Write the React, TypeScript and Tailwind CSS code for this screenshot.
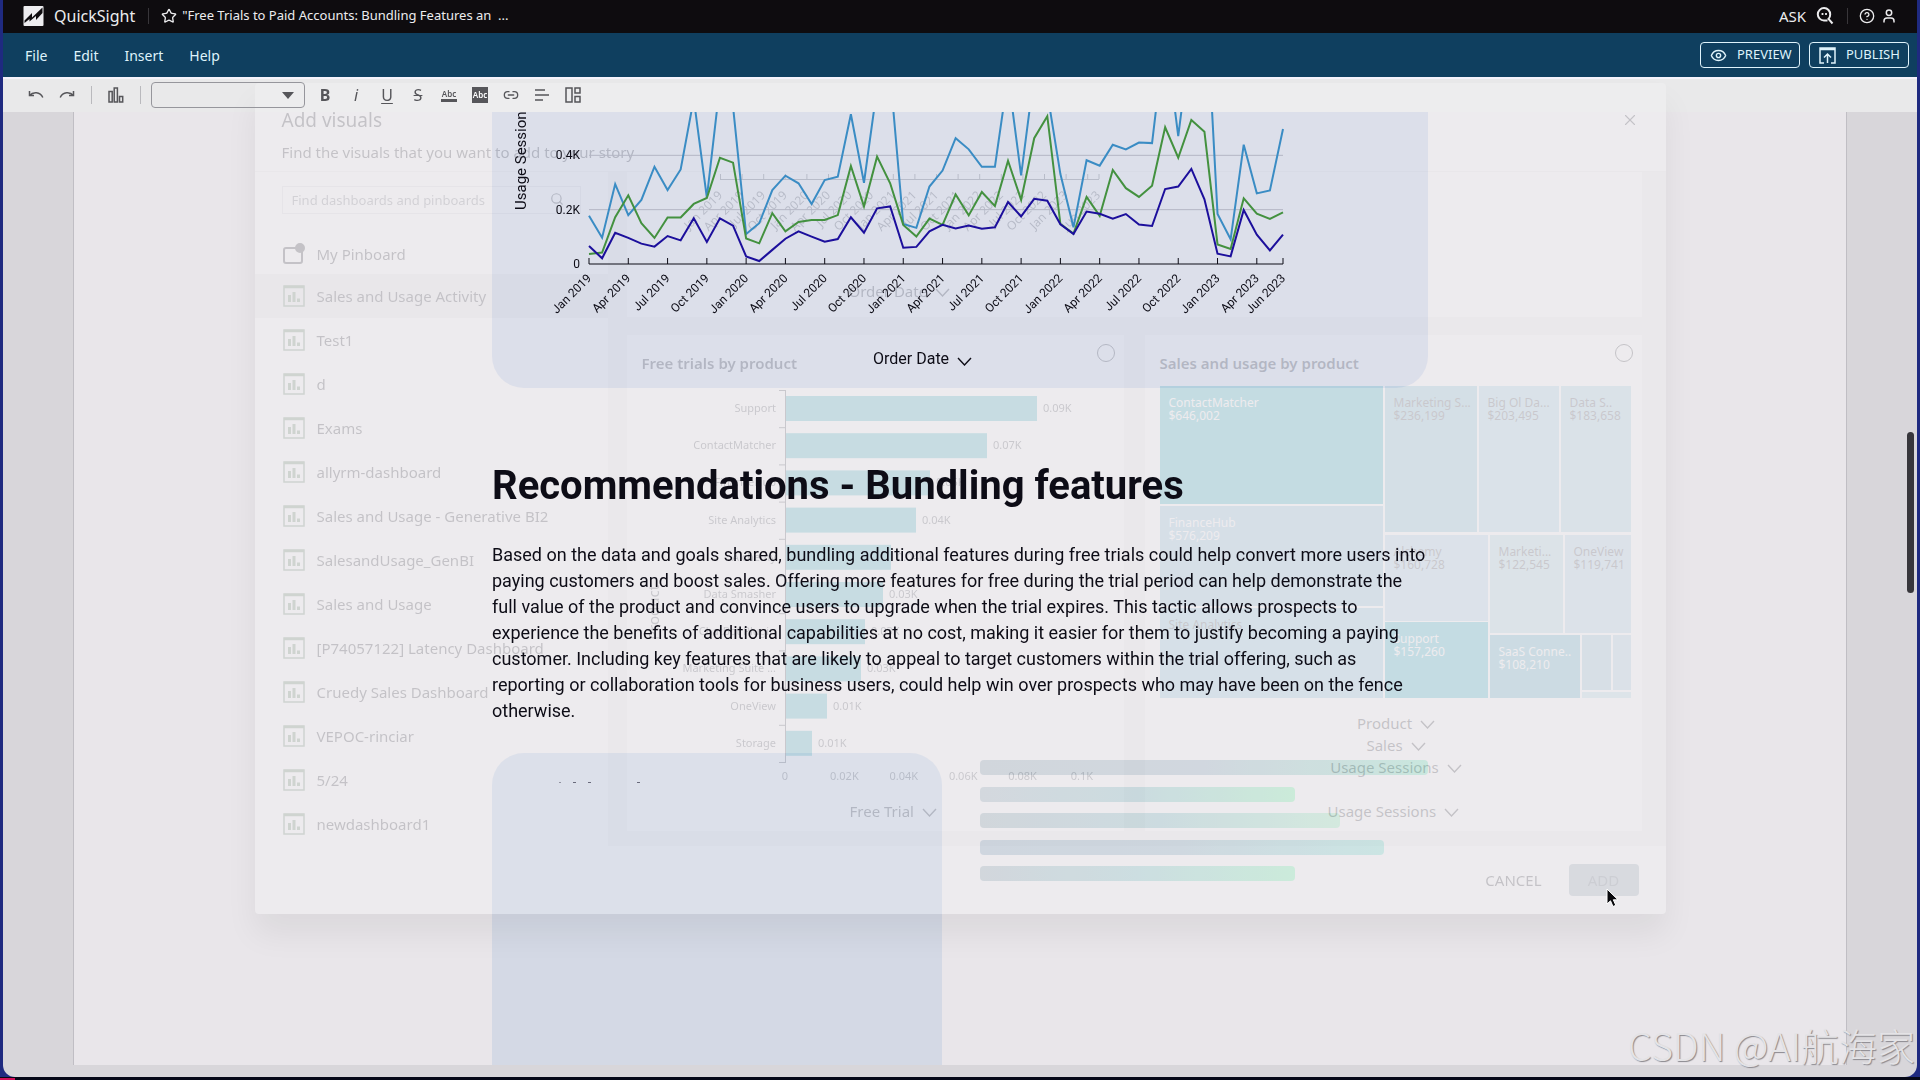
import React from "react";
import { LuSearch, LuX, LuStar, LuCircleHelp, LuEye, LuLink2 } from "react-icons/lu";

const dashboards = [
  "Sales and Usage Activity",
  "Test1",
  "d",
  "Exams",
  "allyrm-dashboard",
  "Sales and Usage - Generative BI2",
  "SalesandUsage_GenBI",
  "Sales and Usage",
  "[P74057122] Latency Dashboard",
  "Cruedy Sales Dashboard",
  "VEPOC-rinciar",
  "5/24",
  "newdashboard1",
];

const quarters = [
  "Jan 2019", "Apr 2019", "Jul 2019", "Oct 2019",
  "Jan 2020", "Apr 2020", "Jul 2020", "Oct 2020",
  "Jan 2021", "Apr 2021", "Jul 2021", "Oct 2021",
  "Jan 2022", "Apr 2022", "Jul 2022", "Oct 2022",
  "Jan 2023", "Apr 2023", "Jun 2023",
];

// monthly usage sessions, Jan 2019 - Jun 2023
const series = [
  {
    color: "#3a8cc4",
    values: [
      178, 97, 294, 180, 236, 358, 272, 348, 608, 244, 662, 579,
      110, 150, 272, 325, 297, 221, 309, 321, 551, 299, 648, 700,
      147, 133, 285, 344, 463, 422, 358, 358, 694, 326, 700, 630,
      331, 135, 382, 362, 439, 422, 447, 445, 850, 471, 850, 1090,
      184, 91, 439, 260, 271, 497,
    ],
  },
  {
    color: "#43913f",
    values: [
      37, 42, 172, 253, 150, 96, 171, 171, 221, 243, 391, 373,
      94, 76, 187, 120, 155, 162, 162, 180, 361, 212, 395, 297,
      144, 101, 167, 144, 256, 179, 265, 213, 380, 236, 463, 544,
      147, 112, 247, 177, 346, 279, 247, 288, 503, 391, 530, 487,
      72, 55, 242, 185, 166, 190,
    ],
  },
  {
    color: "#1c0f9c",
    values: [
      66, 21, 115, 96, 75, 64, 103, 87, 168, 81, 168, 141,
      28, 11, 52, 93, 120, 101, 82, 92, 172, 115, 205, 212,
      60, 63, 120, 144, 131, 142, 130, 135, 228, 175, 240, 233,
      146, 110, 193, 185, 167, 184, 145, 140, 276, 285, 350, 238,
      38, 28, 199, 108, 50, 108,
    ],
  },
];

const trials = [
  { name: "Support", width: 251, label: "0.09K" },
  { name: "ContactMatcher", width: 201, label: "0.07K" },
  { name: "FinanceHub", width: 144, label: "0.05K" },
  { name: "Site Analytics", width: 130, label: "0.04K" },
  { name: "Alchemy", width: 105, label: "0.04K" },
  { name: "Data Smasher", width: 97, label: "0.03K" },
  { name: "ChatBot Plugin", width: 79, label: "0.03K" },
  { name: "Marketing Suite ...", width: 75, label: "0.03K" },
  { name: "OneView", width: 41, label: "0.01K" },
  { name: "Storage", width: 26, label: "0.01K" },
];

const X0 = 97;
const X1 = 791;
const BASE = 152;
const monthX = (i: number) => X0 + (i * (X1 - X0)) / 53;
const valueY = (v: number) => BASE - v * 0.2717;
const quarterX = (i: number) => (i === 18 ? X1 : monthX(i * 3));

function Divider(props: { className: string }) {
  return <span className={`w-px ${props.className}`} />;
}

function Chevron() {
  return (
    <svg className="mt-1" width="15" height="9" viewBox="0 0 15 9" fill="none" stroke="currentColor" strokeWidth="1.400">
      <path d="M1 1l6.500 7L14 1" />
    </svg>
  );
}

function TopBar() {
  return (
    <header className="flex h-[33px] items-center bg-[#0e0c0f] pb-px pr-[22px] pl-5 text-[#ececee]">
      <svg width="21" height="20" viewBox="0 0 20 20" aria-hidden="true">
        <path fill="#ededf0" d="M1 0h18a1 1 0 0 1 1 1v18a1 1 0 0 1-1 1H1a1 1 0 0 1-1-1V1a1 1 0 0 1 1-1z" />
        <path fill="#0e0c0f" d="M1 14.500L8.500 7v4.500L19 1.500v5.500L12.500 14v-4L6 15.500v-2.500L1 17z" />
      </svg>
      <span className="ml-[10px] text-[16px]">QuickSight</span>
      <Divider className="ml-[13px] h-4 bg-[#38363a]" />
      <button aria-label="Favorite" className="ml-[12px]">
        <LuStar size={16} />
      </button>
      <span className="ml-[5px] text-[13px]">"Free Trials to Paid Accounts: Bundling Features an&nbsp; ...</span>
      <div className="ml-auto flex items-center">
        <button className="flex items-center text-[15px]">
          ASK
          <svg className="ml-[10px]" width="18" height="18" viewBox="0 0 18 18" fill="none" stroke="currentColor" strokeWidth="2">
            <path d="M11.500 13.500H8A6.200 6.200 0 1 1 14.200 7.500c0 2-.5 3.200-1.700 4.400L16.500 16.500" />
            <path d="M6.500 6v2M10 6v2" strokeWidth="1.800" />
          </svg>
        </button>
        <Divider className="ml-[13px] h-4 bg-[#38363a]" />
        <button aria-label="Help" className="ml-[11px]">
          <LuCircleHelp size={16} />
        </button>
        <button aria-label="Account" className="ml-[8px]">
          <svg width="12" height="14" viewBox="0 0 12 14" fill="none" stroke="currentColor" strokeWidth="1.500">
            <circle cx="6" cy="3.800" r="2.700" />
            <path d="M1 13.500V12a3 3 0 0 1 3-3h4a3 3 0 0 1 3 3v1.500" />
          </svg>
        </button>
      </div>
    </header>
  );
}

function MenuBar() {
  return (
    <nav className="flex h-[44px] items-center bg-[#0f3f5f] pr-2 pl-[22px] text-[14px] text-[#dff3fb]">
      <div className="flex gap-[26px]">
        <button>File</button>
        <button>Edit</button>
        <button>Insert</button>
        <button>Help</button>
      </div>
      <div className="ml-auto flex gap-[9px] text-[13px]">
        <button className="flex h-[26px] w-[100px] items-center gap-[10px] rounded border border-[#dff3fb] pl-[9px]">
          <LuEye size={17} />
          PREVIEW
        </button>
        <button className="flex h-[26px] w-[100px] items-center gap-[10px] rounded border border-[#dff3fb] pl-[9px]">
          <svg width="17" height="17" viewBox="0 0 17 17" fill="none" stroke="currentColor" strokeWidth="1.500">
            <path d="M5 16H1V1h15v15h-4M1 2.500h15M8.500 16V7M5 10.500L8.500 7l3.500 3.500" />
          </svg>
          PUBLISH
        </button>
      </div>
    </nav>
  );
}

function Toolbar() {
  return (
    <div className="relative h-[35px] border-t-2 border-[#f4f2fb] bg-[#e9e9ea]">
      <div className="relative z-20 flex h-full items-center pb-[2px] pl-[25px] text-[#56565a]">
        <button aria-label="Undo">
          <svg width="16" height="12" viewBox="0 0 16 12" fill="none" stroke="currentColor" strokeWidth="1.500">
            <path d="M1.500 2v4.500H6M1.500 6.500C5 2.500 12 2.500 14.800 8.500" />
          </svg>
        </button>
        <button aria-label="Redo" className="ml-[15px]">
          <svg width="16" height="12" viewBox="0 0 16 12" fill="none" stroke="currentColor" strokeWidth="1.500">
            <path d="M14.500 2v4.500H10M14.500 6.500C11 2.500 4 2.500 1.200 8.500" />
          </svg>
        </button>
        <Divider className="ml-4 h-[18px] bg-[#b9b9bd]" />
        <button aria-label="Add visual" className="ml-4">
          <svg width="16" height="16" viewBox="0 0 16 16" fill="none" stroke="currentColor" strokeWidth="1.500">
            <path d="M1 4.500h3.200V15H1zM6.200 1h3.200v14H6.200zM11.500 9.500h3.200V15h-3.200z" />
          </svg>
        </button>
        <Divider className="ml-4 h-[18px] bg-[#b9b9bd]" />
        <div className="relative ml-[10px]">
          <select
            aria-label="Paragraph style"
            className="block h-[26px] w-[154px] appearance-none rounded border border-[#96969c]"
          >
            <option></option>
          </select>
          <span className="pointer-events-none absolute top-[10px] right-[11px] border-x-[6px] border-t-[7px] border-x-transparent border-t-[#56565a]" />
        </div>
        <div className="ml-[12px] flex items-center gap-[15px] text-[16px] leading-4">
          <button className="w-4 font-bold">B</button>
          <button className="w-4 italic">i</button>
          <button className="w-4 underline underline-offset-2">U</button>
          <button className="w-4 line-through">S</button>
          <button className="w-4 border-b-[3px] border-[#56565a] text-center text-[8px] leading-[11px] font-semibold">Abc</button>
          <button className="h-4 w-4 bg-[#56565a] text-center text-[8px] leading-4 font-semibold text-white">Abc</button>
          <button aria-label="Link">
            <LuLink2 size={16} />
          </button>
          <button aria-label="Align">
            <svg width="16" height="16" viewBox="0 0 16 16" stroke="currentColor" strokeWidth="1.500">
              <path d="M1 3h10M1 8h14M1 13h8" />
            </svg>
          </button>
          <button aria-label="Layout">
            <svg width="16" height="16" viewBox="0 0 16 16" fill="none" stroke="currentColor" strokeWidth="1.500">
              <path d="M1 1h6v14H1zM10 1h5v5h-5zM10 9.500h5V15h-5z" />
            </svg>
          </button>
        </div>
      </div>
    </div>
  );
}

function UsageChart() {
  return (
    <div className="h-[276px] rounded-b-[32px] bg-[#d4d7e5]">
      <svg className="relative z-20" width="936" height="168" viewBox="0 0 936 168" overflow="hidden">
        <text transform="translate(34 98) rotate(-90)" fontSize="15" fill="#0d0c16">
          Usage Sessions
        </text>
        {[200, 400].map((v) => (
          <line key={v} x1={X0} x2={X1} y1={valueY(v)} y2={valueY(v)} stroke="#b4b6c4" />
        ))}
        {["0", "0.2K", "0.4K"].map((t, i) => (
          <text key={t} x={X0 - 9} y={valueY(i * 200) + 4} textAnchor="end" fontSize="12" fill="#0d0c16">
            {t}
          </text>
        ))}
        {series.map((s) => (
          <polyline
            key={s.color}
            points={s.values.map((v, i) => `${monthX(i)},${valueY(v)}`).join(" ")}
            fill="none"
            stroke={s.color}
            strokeWidth="2"
          />
        ))}
        <line x1={X0} x2={X1} y1={BASE} y2={BASE} stroke="#0d0c16" />
        {quarters.map((q, i) => (
          <line key={q} x1={quarterX(i)} x2={quarterX(i)} y1={BASE - 6} y2={BASE} stroke="#0d0c16" />
        ))}
      </svg>
      <svg className="relative z-20 -mt-3 block" width="936" height="68" viewBox="0 0 936 68">
        {quarters.map((q, i) => (
          <text
            key={q}
            transform={`translate(${quarterX(i) + 3} 11) rotate(-45)`}
            textAnchor="end"
            fontSize="12"
            fill="#0d0c16"
          >
            {q}
          </text>
        ))}
      </svg>
      <button className="relative z-20 mt-[11px] ml-[381px] flex items-center gap-[8px] text-[16px] leading-6 text-[#0d0c16]">
        Order Date
        <Chevron />
      </button>
    </div>
  );
}

function Story() {
  return (
    <main className="flex-1 bg-[#d8d6da] px-[70px] pb-3">
      <article className="h-full border-x border-[#c0bec4] bg-[#e9e6ea] font-[Roboto,sans-serif]">
        <div className="mx-auto w-[936px]">
          <UsageChart />
          <h1 className="relative z-20 mt-[74px] text-[40px] leading-[48px] font-bold text-[#0d0c16]">
            Recommendations - Bundling features
          </h1>
          <p className="relative z-20 mt-[32px] text-[18px] leading-[26px] text-[#0d0c16]">
            Based on the data and goals shared, bundling additional features during free trials could help convert more
            users into paying customers and boost sales. Offering more features for free during the trial period can help
            demonstrate the full value of the product and convince users to upgrade when the trial expires. This tactic
            allows prospects to experience the benefits of additional capabilities at no cost, making it easier for them
            to justify becoming a paying customer. Including key features that are likely to appeal to target customers
            within the trial offering, such as reporting or collaboration tools for business users, could help win over
            prospects who may have been on the fence otherwise.
          </p>
          <div className="mt-[29px] flex">
            <div className="h-[312px] w-[450px] rounded-t-[32px] bg-[#d4d9e5] pt-[29px] pl-[67px]">
              <div className="flex h-px gap-[12px]">
                <i className="w-[2px] bg-[#77788a]" />
                <i className="w-[3px] bg-[#44455a]" />
                <i className="w-[3px] bg-[#44455a]" />
                <i className="ml-[34px] w-[3px] bg-[#44455a]" />
              </div>
            </div>
            <div className="mt-[7px] ml-[38px] flex h-[121px] flex-1 flex-col justify-between">
              <div className="h-[15px] w-full rounded-sm bg-linear-to-r from-[#c6ccd4] via-[#c6ced7] to-[#bce1d6]" />
              <div className="h-[15px] w-[315px] rounded-sm bg-linear-to-r from-[#c9cfd6] via-[#bfd3d9] to-[#bfe6d0]" />
              <div className="h-[15px] w-[360px] rounded-sm bg-linear-to-r from-[#c6ccd3] via-[#c0d3d9] to-[#c9e4d6]" />
              <div className="h-[15px] w-[404px] rounded-sm bg-linear-to-r from-[#c3ccd8] via-[#c3cfd9] to-[#bfdfdd]" />
              <div className="h-[15px] w-[315px] rounded-sm bg-linear-to-r from-[#c7cdd4] via-[#c0d6da] to-[#bfe6d2]" />
            </div>
          </div>
        </div>
      </article>
    </main>
  );
}

function DashboardIcon() {
  return (
    <svg width="22" height="22" viewBox="0 0 22 22" fill="none" stroke="#6a8a6c" strokeWidth="1.500">
      <path d="M1 1h20v20H1z" />
      <path d="M1 2h20" strokeWidth="2.500" />
      <path d="M6.500 17V10M11 17V7M15.500 17v-3.500" strokeWidth="3" />
    </svg>
  );
}

function VisualCard(props: { title: string; children: React.ReactNode }) {
  return (
    <section className="h-[496px] min-w-0 flex-1 bg-white pt-[8px] pr-[9px] pl-[15px]">
      <div className="flex justify-between">
        <h3 className="mt-[8px] text-[15px] leading-6 font-semibold">{props.title}</h3>
        <input
          type="radio"
          name="visual"
          aria-label={props.title}
          className="mt-px h-[18px] w-[18px] appearance-none rounded-full border border-[#33363c]"
        />
      </div>
      {props.children}
    </section>
  );
}

function FieldLabel(props: { text: string }) {
  return (
    <button className="flex items-center gap-[8px] text-[15px] leading-[22px]">
      {props.text}
      <Chevron />
    </button>
  );
}

function TrialsChart() {
  return (
    <svg className="mt-[15px] block" width="467" height="402" viewBox="0 0 467 402" fontSize="11" fill="#4d525a">
      <path d="M143.500 0V372" stroke="#4d525a" />
      {[...trials, null].map((_, i) => (
        <path key={i} d={`M137 ${i * 37.2 + 0.5}h7`} stroke="#4d525a" />
      ))}
      {trials.map((t, i) => (
        <g key={t.name}>
          <rect x="144" y={i * 37.2 + 6} width={t.width} height="25" fill="#40b4c2" />
          <text x="134" y={i * 37.2 + 22} textAnchor="end">
            {t.name}
          </text>
          <text x={150 + t.width} y={i * 37.2 + 22}>
            {t.label}
          </text>
        </g>
      ))}
      {["0", "0.02K", "0.04K", "0.06K", "0.08K", "0.1K"].map((t, i) => (
        <text key={t} x={143 + i * 59.4} y="390" textAnchor="middle">
          {t}
        </text>
      ))}
      <text transform="translate(17 250) rotate(-90)" fontSize="15">
        Product
      </text>
    </svg>
  );
}

function Tile(props: { className: string; name?: string; value?: string }) {
  return (
    <div className={`overflow-hidden pt-[10px] pl-[9px] text-[12px] leading-[13px] ${props.className}`}>
      <div>{props.name}</div>
      <div>{props.value}</div>
    </div>
  );
}

function Treemap() {
  return (
    <div className="mt-[11px] flex h-[312px] gap-[2px] text-[#4d525a]">
      <div className="flex w-[223px] flex-col gap-[2px]">
        <Tile className="h-[118px] bg-[#35b4c2] text-white" name="ContactMatcher" value="$646,002" />
        <Tile className="h-[100px] bg-[#8ac0dc] text-white" name="FinanceHub" value="$576,209" />
        <Tile className="flex-1 bg-[#8ac8e0]" name="Site Analytics" />
      </div>
      <div className="flex w-[246px] flex-col gap-[3px]">
        <div className="flex h-[146px] gap-[2px]">
          <Tile className="w-[92px] bg-[#84c0d4]" name="Marketing S..." value="$236,199" />
          <Tile className="w-[80px] bg-[#a0d2e4]" name="Big Ol Da..." value="$203,495" />
          <Tile className="flex-1 bg-[#a0cfe2]" name="Data S.." value="$183,658" />
        </div>
        <div className="flex flex-1 gap-[2px]">
          <div className="flex w-[103px] flex-col gap-px">
            <Tile className="h-[86px] bg-[#acd2e8]" name="Alchemy" value="$160,728" />
            <Tile className="flex-1 bg-[#35b4c8] text-white" name="Support" value="$157,260" />
          </div>
          <div className="flex flex-1 flex-col gap-[2px]">
            <div className="flex h-[98px] gap-[2px]">
              <Tile className="w-[73px] bg-[#aad6de]" name="Marketi..." value="$122,545" />
              <Tile className="flex-1 bg-[#aacfe4]" name="OneView" value="$119,741" />
            </div>
            <div className="flex flex-1 gap-[2px]">
              <Tile className="w-[90px] bg-[#5ab0c6] text-white" name="SaaS Conne.." value="$108,210" />
              <div className="flex flex-1 flex-col gap-[2px]">
                <div className="flex flex-1 gap-[2px]">
                  <div className="flex-1 bg-[#90c0d8]" />
                  <div className="w-[18px] bg-[#a6cce0]" />
                </div>
                <div className="h-[6px] bg-[#b0dce4]" />
              </div>
            </div>
          </div>
        </div>
      </div>
    </div>
  );
}

function AddVisualsDialog() {
  return (
    <div
      role="dialog"
      aria-label="Add visuals"
      className="mx-auto flex h-[831px] max-w-[1411px] flex-col rounded bg-white text-[#33363c] opacity-20 shadow-[0_20px_32px_rgba(0,0,0,0.3)]"
    >
      <div className="flex h-[91px] justify-between border-b border-[#e8e8ec] px-[27px]">
        <div>
          <h2 className="mt-[23px] text-[19px] leading-7">Add visuals</h2>
          <p className="mt-[6px] text-[15px] leading-6">Find the visuals that you want to add to your story</p>
        </div>
        <button aria-label="Close" className="mt-[28px] self-start">
          <LuX size={18} strokeWidth={1.5} />
        </button>
      </div>
      <div className="flex flex-1">
        <div className="w-[353px] pt-[14px]">
          <div className="relative mx-[27px] h-[28px] w-[299px]">
            <input
              type="text"
              placeholder="Find dashboards and pinboards"
              aria-label="Find dashboards and pinboards"
              className="h-full w-full border border-[#dcdce2] pl-[9px] text-[13px] placeholder:text-[#7a7d84]"
            />
            <LuSearch size={14} className="absolute top-[6px] right-[17px]" />
          </div>
          <button className="mt-[20px] flex h-[40px] w-full items-center gap-[11px] pl-[27px] text-[15px]">
            <svg width="24" height="22" viewBox="0 0 24 22" fill="none" stroke="currentColor" strokeWidth="2">
              <rect x="2" y="5" width="18" height="15" rx="2" />
              <circle cx="18" cy="5" r="4" fill="currentColor" />
            </svg>
            My Pinboard
          </button>
          {dashboards.map((name, i) => (
            <button
              key={name}
              className={`flex h-[44px] w-full items-center gap-[12px] pl-[28px] text-[15px] whitespace-nowrap ${i === 0 ? "bg-[#e8e8ec]" : ""}`}
            >
              <DashboardIcon />
              {name}
            </button>
          ))}
        </div>
        <div className="flex min-w-0 flex-1 flex-col gap-[18px] bg-[#efeff0] pr-[24px] pl-[19px]">
          <div className="h-[145px] bg-white">
            <svg className="block" width="490" height="108" viewBox="0 0 490 108" fontSize="12" fill="#4d525a">
              <path d="M93 7.500H472" stroke="#4d525a" />
              {quarters.map((q, i) => (
                <g key={q}>
                  <path d={`M${i === 18 ? 472 : 93.5 + i * 21.6} 2v5`} stroke="#4d525a" />
                  <text transform={`translate(${i === 18 ? 474 : 96 + i * 21.6} 24) rotate(-45)`} textAnchor="end">
                    {i === 17 ? "" : q}
                  </text>
                </g>
              ))}
            </svg>
            <div className="ml-[222px]">
              <FieldLabel text="Order Date" />
            </div>
          </div>
          <div className="flex gap-[21px]">
            <VisualCard title="Free trials by product">
              <TrialsChart />
              <div className="mt-[8px] ml-[208px]">
                <FieldLabel text="Free Trial" />
              </div>
            </VisualCard>
            <VisualCard title="Sales and usage by product">
              <Treemap />
              <div className="mt-[14px] flex flex-col items-center">
                <FieldLabel text="Product" />
                <FieldLabel text="Sales" />
                <FieldLabel text="Usage Sessions" />
              </div>
              <div className="mt-[22px] ml-[168px]">
                <FieldLabel text="Usage Sessions" />
              </div>
            </VisualCard>
          </div>
        </div>
      </div>
      <div className="flex h-[70px] items-center justify-end gap-[27px] pr-[27px] text-[15px]">
        <button>CANCEL</button>
        <button className="h-[32px] w-[70px] rounded-sm bg-[#97a8b4] text-[#5c6e7a]">ADD</button>
      </div>
    </div>
  );
}

export default function App() {
  return (
    <div className="min-h-screen bg-[#060818] font-['Noto_Sans',sans-serif]">
      <div className="relative flex h-screen flex-col overflow-hidden border-b-3 border-[#060818] bg-[#1f2a80] px-[3px]">
        <div className="flex flex-1 flex-col overflow-hidden rounded-b-xl">
          <TopBar />
          <MenuBar />
          <Toolbar />
          <Story />
        </div>
        <div className="absolute inset-x-0 top-[83px] z-10">
          <AddVisualsDialog />
        </div>
        <div className="absolute top-[432px] right-[6px] h-[161px] w-[7px] rounded-full bg-[#37363b]" />
        <svg className="absolute top-[888px] right-[300px] z-30" width="14" height="20" viewBox="0 0 14 20">
          <path d="M1 1v15l3.500-3.200L7 18.500l2.800-1.200L7.300 11.800H12z" fill="#08080c" stroke="#fff" strokeWidth="1" />
        </svg>
        <div className="absolute right-[5px] bottom-[5px] z-30 font-['Noto_Sans_CJK_SC',sans-serif] text-[38px] leading-[54px] font-light text-[#e4e3e6] [text-shadow:1px_1px_1px_#8a888e]">
          CSDN @AI航海家
        </div>
      </div>
      <div className="fixed bottom-0 left-0 h-[2px] w-[15px] bg-[#d0105a]" />
    </div>
  );
}
